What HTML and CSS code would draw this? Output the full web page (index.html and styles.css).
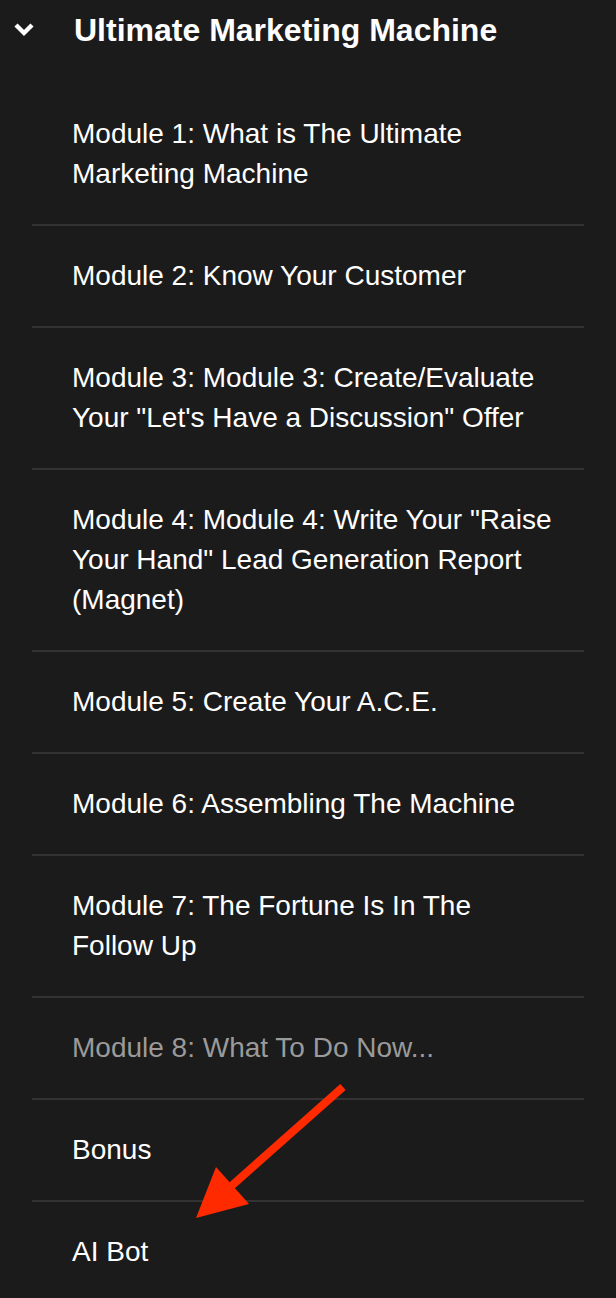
FILE: index.html
```html
<!DOCTYPE html>
<html lang="en">
<head>
<meta charset="utf-8">
<title>Ultimate Marketing Machine</title>
<link rel="stylesheet" href="styles.css">
</head>
<body>
<div class="panel">
  <div class="section-header">
    <svg class="chevron" width="22" height="15" viewBox="0 0 22 15" aria-hidden="true">
      <polyline points="3,3 11,11 19,3" fill="none" stroke="#ffffff" stroke-width="4.4" stroke-linejoin="miter" stroke-linecap="butt"/>
    </svg>
    <h2 class="section-title">Ultimate Marketing Machine</h2>
  </div>
  <ul class="module-list">
    <li class="module-item">Module 1: What is The Ultimate Marketing Machine</li>
    <li class="module-item">Module 2: Know Your Customer</li>
    <li class="module-item">Module 3: Module 3: Create/Evaluate Your "Let's Have a Discussion" Offer</li>
    <li class="module-item">Module 4: Module 4: Write Your "Raise Your Hand" Lead Generation Report (Magnet)</li>
    <li class="module-item">Module 5: Create Your A.C.E.</li>
    <li class="module-item">Module 6: Assembling The Machine</li>
    <li class="module-item">Module 7: The Fortune Is In The Follow Up</li>
    <li class="module-item module-item--current">Module 8: What To Do Now...</li>
    <li class="module-item">Bonus</li>
    <li class="module-item">AI Bot</li>
  </ul>
  <svg class="annotation-arrow" width="616" height="1298" viewBox="0 0 616 1298" aria-hidden="true">
    <line x1="343" y1="1087" x2="228" y2="1189" stroke="#ff2a00" stroke-width="8"/>
    <polygon points="196,1218 216,1167 249,1204" fill="#ff2a00"/>
  </svg>
</div>
</body>
</html>
```

FILE: styles.css
```css
html, body {
  margin: 0;
  padding: 0;
  background: #1b1b1b;
}

body {
  font-family: "Liberation Sans", Arial, sans-serif;
  color: #ffffff;
  overflow: hidden;
}

.panel {
  position: relative;
  width: 616px;
  min-height: 1298px;
}

.section-header {
  display: flex;
  align-items: flex-start;
  height: 84px;
  box-sizing: border-box;
}

.chevron {
  display: block;
  margin: 22px 0 0 13px;
  flex: none;
}

.section-title {
  margin: 12px 0 0 39px;
  font-size: 32px;
  line-height: 36px;
  font-weight: 700;
  color: #ffffff;
}

.module-list {
  list-style: none;
  margin: 0 32px;
  padding: 0;
}

.module-item {
  padding: 30px 30px 30px 40px;
  font-size: 28px;
  line-height: 40px;
  color: #ffffff;
  border-bottom: 2px solid #333333;
}

.module-item:last-child {
  border-bottom: none;
}

.module-item--current {
  color: #9a9a9a;
}

.annotation-arrow {
  position: absolute;
  left: 0;
  top: 0;
  pointer-events: none;
}
```
